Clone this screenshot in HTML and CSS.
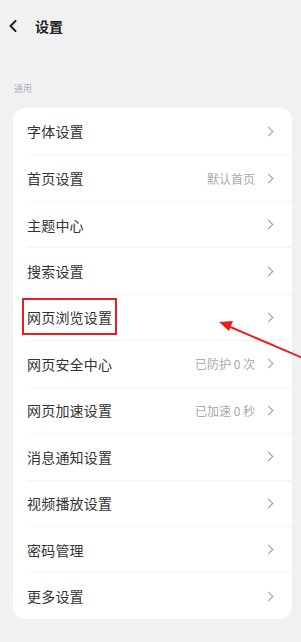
FILE: index.html
```html
<!DOCTYPE html>
<html lang="zh-CN">
<head>
    <meta charset="UTF-8">
    <meta name="viewport" content="width=device-width, initial-scale=1.0">
    <title>设置</title>
    <link rel="stylesheet" href="styles.css">
</head>
<body>
    <div class="page">
        <header class="top-bar">
            <svg class="back" width="10" height="12" viewBox="0 0 10 12"><path d="M7.5 1 L2.5 6 L7.5 11" fill="none" stroke="#222" stroke-width="2" stroke-linecap="round" stroke-linejoin="round"/></svg>
            <h1>设置</h1>
        </header>

        <div class="section-label">通用</div>

        <div class="card">
            <div class="row"><span class="row-title">字体设置</span><span class="row-right"><i class="chev"></i></span></div>
            <div class="row"><span class="row-title">首页设置</span><span class="row-right"><span class="row-value">默认首页</span><i class="chev"></i></span></div>
            <div class="row"><span class="row-title">主题中心</span><span class="row-right"><i class="chev"></i></span></div>
            <div class="row"><span class="row-title">搜索设置</span><span class="row-right"><i class="chev"></i></span></div>
            <div class="row"><span class="row-title marked">网页浏览设置</span><span class="row-right"><i class="chev"></i></span></div>
            <div class="row"><span class="row-title">网页安全中心</span><span class="row-right"><span class="row-value">已防护 0 次</span><i class="chev"></i></span></div>
            <div class="row"><span class="row-title">网页加速设置</span><span class="row-right"><span class="row-value">已加速 0 秒</span><i class="chev"></i></span></div>
            <div class="row"><span class="row-title">消息通知设置</span><span class="row-right"><i class="chev"></i></span></div>
            <div class="row"><span class="row-title">视频播放设置</span><span class="row-right"><i class="chev"></i></span></div>
            <div class="row"><span class="row-title">密码管理</span><span class="row-right"><i class="chev"></i></span></div>
            <div class="row"><span class="row-title">更多设置</span><span class="row-right"><i class="chev"></i></span></div>
        </div>

        <!-- annotation arrow -->
        <svg class="arrow" width="301" height="642" viewBox="0 0 301 642">
            <line x1="305" y1="359" x2="228" y2="326" stroke="#ee1c1c" stroke-width="2"/>
            <polygon points="219,322 233,321 229,331" fill="#ee1c1c"/>
        </svg>
    </div>
</body>
</html>
```

FILE: styles.css
```css
*{margin:0;padding:0;box-sizing:border-box}
body{background:#f1f1f4;font-family:"Noto Sans CJK SC","Noto Sans",sans-serif;color:#333;width:301px;height:642px;overflow:hidden}
.page{position:relative;height:642px}
.top-bar{height:52px;display:flex;align-items:center;padding-left:8px}
.back{display:block;margin-right:17px}
.top-bar h1{font-size:14px;font-weight:600;color:#222}
.section-label{font-size:9px;color:#b0b0b4;padding:30px 0 0 14px;height:56px}
.card{margin:0 9px 0 13px;background:#fff;border-radius:12px;overflow:hidden}
.row{height:46.45px;display:flex;align-items:center;justify-content:space-between;margin-left:14px;padding-right:18px;border-top:1px solid #f4f4f6}
.row:first-child{border-top:none}
.row-title{font-size:14px;color:#333;letter-spacing:0.2px}
.row-right{display:flex;align-items:center}
.row-value{font-size:12px;color:#aaa;margin-right:10px}
.chev{display:block;width:7px;height:7px;border-right:1.4px solid #999;border-top:1.4px solid #999;transform:rotate(45deg);margin-right:2px}
.marked{position:relative}
.marked::after{content:"";position:absolute;left:-5px;right:-5px;top:-9px;bottom:-8px;border:2px solid #ee1c1c}
.arrow{position:absolute;left:0;top:0;pointer-events:none}
```
